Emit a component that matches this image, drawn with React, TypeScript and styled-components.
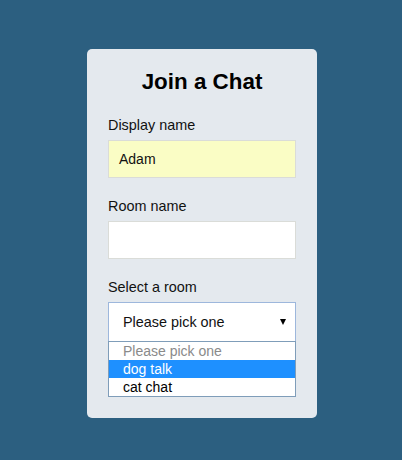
import React from "react";
import styled, { createGlobalStyle } from "styled-components";

const Global = createGlobalStyle`
  html, body { margin: 0; padding: 0; }
  body {
    background: #2c5f80;
    font-family: "Liberation Sans", Arial, sans-serif;
    color: #111;
  }
`;

const Page = styled.div`
  width: 402px;
  height: 460px;
  display: flex;
  justify-content: center;
  align-items: flex-start;
  padding: 49px 0 0 2px;
  box-sizing: border-box;
`;

const Card = styled.div`
  width: 230px;
  box-sizing: border-box;
  background: #e4e9ee;
  border-radius: 5px;
  padding: 19px 21px 77px;
`;

const Title = styled.h2`
  margin: 0 0 21px;
  font-size: 22.4px;
  line-height: 28px;
  font-weight: bold;
  text-align: center;
  color: #000;
`;

const Field = styled.div`
  position: relative;
  display: flex;
  flex-direction: column;
  margin-bottom: 20px;
  &:last-child { margin-bottom: 0; }
`;

const Label = styled.label`
  font-size: 14.4px;
  line-height: 16px;
  margin-bottom: 7px;
  color: #111;
`;

const Input = styled.div<{ $filled?: boolean }>`
  height: 38px;
  box-sizing: border-box;
  border: 1px solid #dadcd8;
  background: ${(p) => (p.$filled ? "#fafdc5" : "#ffffff")};
  padding: 0 10px;
  display: flex;
  align-items: center;
  font-size: 14px;
  color: #111;
`;

const Select = styled.div`
  height: 39px;
  box-sizing: border-box;
  border: 1px solid #9db7dc;
  border-bottom: none;
  background: #fff;
  padding: 0 8px 0 14px;
  display: flex;
  align-items: center;
  justify-content: space-between;
  font-size: 14.4px;
  color: #111;
`;

const Arrow = styled.span`
  width: 0;
  height: 0;
  border-left: 3.5px solid transparent;
  border-right: 3.5px solid transparent;
  border-top: 6px solid #000;
  margin-right: 1px;
`;

const List = styled.ul`
  position: absolute;
  left: 0;
  right: 0;
  top: 100%;
  margin: 0;
  padding: 0;
  list-style: none;
  border: 1px solid #7f9db9;
  background: #fff;
`;

const Option = styled.li<{ $active?: boolean; $muted?: boolean }>`
  height: 18px;
  line-height: 18px;
  padding: 0 14px;
  font-size: 14px;
  background: ${(p) => (p.$active ? "#1e90ff" : "#fff")};
  color: ${(p) => (p.$active ? "#fff" : p.$muted ? "#8a8a8a" : "#000")};
`;

export default function App() {
  return (
    <>
      <Global />
      <Page>
        <Card>
          <Title>Join a Chat</Title>
          <Field>
            <Label>Display name</Label>
            <Input $filled>Adam</Input>
          </Field>
          <Field>
            <Label>Room name</Label>
            <Input />
          </Field>
          <Field>
            <Label>Select a room</Label>
            <Select>
              <span>Please pick one</span>
              <Arrow />
            </Select>
            <List>
              <Option $muted>Please pick one</Option>
              <Option $active>dog talk</Option>
              <Option>cat chat</Option>
            </List>
          </Field>
        </Card>
      </Page>
    </>
  );
}
